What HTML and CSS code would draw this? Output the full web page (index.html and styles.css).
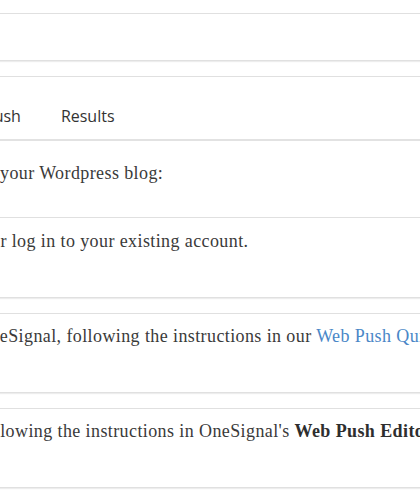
FILE: index.html
```html
<!DOCTYPE html>
<html lang="en">
<head>
  <meta charset="UTF-8" />
  <meta name="viewport" content="width=device-width, initial-scale=1.0"/>
  <title>Web Push Setup</title>
  <link rel="stylesheet" href="styles.css">
</head>
<body>
  <div class="page">
    <div class="card card-top"></div>

    <div class="card">
      <div class="tabs">
        <span class="tab">Push</span>
        <span class="tab">Results</span>
      </div>
      <div class="step step-first">
        <p>your Wordpress blog:</p>
      </div>
      <div class="step">
        <p class="cut-or">or log in to your existing account.</p>
      </div>
    </div>

    <div class="card">
      <div class="step">
        <p class="cut-on">OneSignal, following the instructions in our <a href="#">Web Push Quickstart</a> guide.</p>
      </div>
    </div>

    <div class="card">
      <div class="step">
        <p class="cut-fol">following the instructions in OneSignal's <strong>Web Push Editor</strong> guide.</p>
      </div>
    </div>
  </div>
</body>
</html>
```

FILE: styles.css
```css
/* Reset & Base */
* {
  box-sizing: border-box;
  margin: 0;
  padding: 0;
}

body {
  font-family: 'Liberation Serif', 'Times New Roman', serif;
  background-color: #fff;
  color: #3a3a3a;
  overflow: hidden;
}

.page {
  padding-top: 13px;
}

/* Cards */
.card {
  background: #fff;
  border-top: 1px solid #e0e0e0;
  border-bottom: 1px solid #e0e0e0;
  box-shadow: 0 1px 1px rgba(0, 0, 0, 0.07);
  margin-bottom: 15px;
}

.card-top {
  height: 48px;
}

/* Tabs */
.tabs {
  display: flex;
  margin-left: -36px;
  padding: 27px 0 11px;
  border-bottom: 2px solid #e2e2e2;
}

.tab {
  font-family: 'Open Sans', sans-serif;
  font-size: 16px;
  line-height: 24px;
  color: #333;
  padding: 0 20px;
}

/* Steps */
.step {
  padding: 9px 0 42px;
}

.step + .step {
  border-top: 1px solid #e0e0e0;
  padding-top: 10px;
}

.step-first {
  padding: 19px 0 30px;
}

.step p {
  font-size: 18px;
  line-height: 27px;
  letter-spacing: 0.4px;
  white-space: nowrap;
}

.step a {
  color: #4a87c7;
  text-decoration: none;
}

.step strong {
  color: #2e2e2e;
}

.cut-or {
  text-indent: -9px;
}

.cut-on {
  text-indent: -23px;
}

.cut-fol {
  text-indent: -21px;
}
```
